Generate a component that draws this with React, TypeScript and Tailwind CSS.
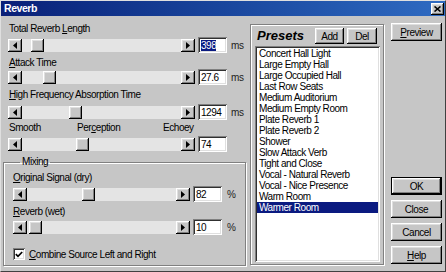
import React from 'react';

const raised =
  'bg-[#c6c6c6] shadow-[inset_-1px_-1px_#000,inset_1px_1px_#fff,inset_-2px_-2px_#808080,inset_2px_2px_#dfdfdf]';
const sunken =
  'bg-white shadow-[inset_1px_1px_#808080,inset_-1px_-1px_#fff,inset_2px_2px_#303030,inset_-2px_-2px_#dfdfdf]';
const etched = 'border border-[#808080] shadow-[1px_1px_0_#fff,inset_1px_1px_0_#fff]';

const presets = [
  'Concert Hall Light',
  'Large Empty Hall',
  'Large Occupied Hall',
  'Last Row Seats',
  'Medium Auditorium',
  'Medium Empty Room',
  'Plate Reverb 1',
  'Plate Reverb 2',
  'Shower',
  'Slow Attack Verb',
  'Tight and Close',
  'Vocal - Natural Reverb',
  'Vocal - Nice Presence',
  'Warm Room',
  'Warmer Room',
];

function Arrow({ left }: { left?: boolean }) {
  return (
    <div className={`flex h-full w-[14px] shrink-0 items-center justify-center ${raised}`}>
      <svg width="4" height="7" viewBox="0 0 4 7">
        <path d={left ? 'M4 0L0 3.5L4 7Z' : 'M0 0L4 3.5L0 7Z'} fill="#000" />
      </svg>
    </div>
  );
}

function Scroll({ w, pos }: { w: string; pos: number }) {
  return (
    <div className={`flex h-[13px] shrink-0 bg-[#e4e4e4] ${w}`}>
      <Arrow left />
      <div className="flex-1">
        <div className={`h-full w-[13px] ${raised}`} style={{ marginLeft: pos }} />
      </div>
      <Arrow />
    </div>
  );
}

function SliderRow({
  w,
  pos,
  value,
  unit,
  selected,
  unitGap = 'ml-[4px]',
  className = '',
}: {
  w: string;
  pos: number;
  value: string;
  unit?: string;
  selected?: boolean;
  unitGap?: string;
  className?: string;
}) {
  return (
    <div className={`flex h-[16px] items-center ${className}`}>
      <Scroll w={w} pos={pos} />
      <div className={`ml-[3px] flex h-[16px] w-[29px] items-center pl-[3px] ${sunken}`}>
        <span className={selected ? 'bg-[#0a1a80] leading-[11px] text-white' : ''}>{value}</span>
      </div>
      {unit && <span className={`${unitGap} text-[#222]`}>{unit}</span>}
    </div>
  );
}

function Label({ children, className = '' }: { children: React.ReactNode; className?: string }) {
  return <div className={`h-[12px] leading-[12px] ${className}`}>{children}</div>;
}

function Button({ children, className = '' }: { children: React.ReactNode; className?: string }) {
  return (
    <div className={`flex items-center justify-center ${raised} ${className}`}>{children}</div>
  );
}

export default function App() {
  return (
    <div className="flex h-[272px] w-[446px] flex-col overflow-hidden border border-t-[#dfdfdf] border-l-[#dfdfdf] border-r-[#404040] border-b-[#404040] bg-[#c6c6c6] font-['Liberation_Sans',Arial,sans-serif] text-[10px] tracking-[-0.45px] text-black">
      {/* title bar */}
      <div className="flex h-[15px] shrink-0 items-center justify-between bg-linear-to-r from-[#0a1f78] to-[#2f6bc2] pl-[3px] pr-[1px]">
        <span className="text-[10.5px] font-bold text-white">Reverb</span>
        <div className={`flex h-[12px] w-[13px] items-center justify-center ${raised}`}>
          <svg width="7" height="6" viewBox="0 0 7 6">
            <path d="M0.5 0.5L6.5 5.5M6.5 0.5L0.5 5.5" stroke="#000" strokeWidth="1.6" />
          </svg>
        </div>
      </div>

      <div className="flex flex-1">
        {/* left column */}
        <div className="ml-[2px] flex w-[243px] flex-col">
          <div className="flex flex-col pl-[5px]">
            <Label className="mt-[7px] pl-[1px]">
              Total Reverb <u>L</u>ength
            </Label>
            <SliderRow className="mt-[2px]" w="w-[187px]" pos={9} value="398" unit="ms" selected />

            <Label className="mt-[4px] pl-[1px]">
              <u>A</u>ttack Time
            </Label>
            <SliderRow w="w-[187px]" pos={21} value="27.6" unit="ms" />

            <Label className="mt-[4px] pl-[1px]">
              <u>H</u>igh Frequency Absorption Time
            </Label>
            <SliderRow className="mt-[3px]" w="w-[187px]" pos={47} value="1294" unit="ms" />

            <div className="mt-[2px] flex h-[12px] pl-[1px] leading-[12px]">
              <span className="w-[68px]">Smooth</span>
              <span className="w-[86px]">
                Per<u>c</u>eption
              </span>
              <span>Echoey</span>
            </div>
            <SliderRow className="mt-[2px]" w="w-[187px]" pos={54} value="74" />
          </div>

          <fieldset className={`mt-[4px] flex h-[110px] flex-col pl-[9px] ${etched}`}>
            <legend className="ml-[7px] h-[12px] px-[2px] leading-[12px]">Mixing</legend>
            <Label className="mt-[4px]">
              <u>O</u>riginal Signal (dry)
            </Label>
            <SliderRow className="mt-[2px]" w="w-[177px]" pos={55} value="82" unit="%" unitGap="ml-[5px]" />
            <Label className="mt-[4px]">
              <u>R</u>everb (wet)
            </Label>
            <SliderRow className="mt-[1px]" w="w-[177px]" pos={2} value="10" unit="%" unitGap="ml-[5px]" />
            <div className="mt-[13px] flex h-[12px] items-center">
              <div className={`flex h-[12px] w-[12px] items-center justify-center ${sunken}`}>
                <svg width="8" height="7" viewBox="0 0 8 7">
                  <path d="M0.8 3.2L3 5.4L7.2 1" stroke="#000" strokeWidth="1.7" fill="none" />
                </svg>
              </div>
              <span className="ml-[4px]">
                <u>C</u>ombine Source Left and Right
              </span>
            </div>
          </fieldset>
        </div>

        {/* presets */}
        <div className={`ml-[4px] mt-[8px] flex h-[241px] w-[134px] flex-col pl-[4px] ${etched}`}>
          <div className="mt-[3px] flex h-[16px] items-center">
            <span className="ml-[2px] w-[58px] text-[13px] font-bold italic tracking-[0px]">Presets</span>
            <Button className="h-[16px] w-[29px]">Add</Button>
            <Button className="ml-[3px] h-[16px] w-[30px]">Del</Button>
          </div>
          <div className={`mt-[2px] flex h-[216px] w-[125px] flex-col p-[2px] ${sunken}`}>
            {presets.map((p) => (
              <div
                key={p}
                className={`h-[11px] whitespace-nowrap pl-[2px] leading-[11px] ${
                  p === 'Warmer Room' ? 'bg-[#0a1a80] text-white' : ''
                }`}
              >
                {p}
              </div>
            ))}
          </div>
        </div>

        {/* right buttons */}
        <div className="ml-[7px] flex w-[52px] flex-col pb-[7px]">
          <Button className="mt-[7px] h-[18px] w-[51px]">
            <span>
              <u>P</u>review
            </span>
          </Button>
          <div className="mt-auto flex flex-col gap-[5px]">
            <div className="h-[18px] w-[51px] border border-black">
              <Button className="h-full w-full">OK</Button>
            </div>
            <Button className="h-[18px] w-[51px]">Close</Button>
            <Button className="h-[18px] w-[51px]">Cancel</Button>
            <Button className="h-[18px] w-[51px]">
              <span>
                <u>H</u>elp
              </span>
            </Button>
          </div>
        </div>
      </div>
    </div>
  );
}
